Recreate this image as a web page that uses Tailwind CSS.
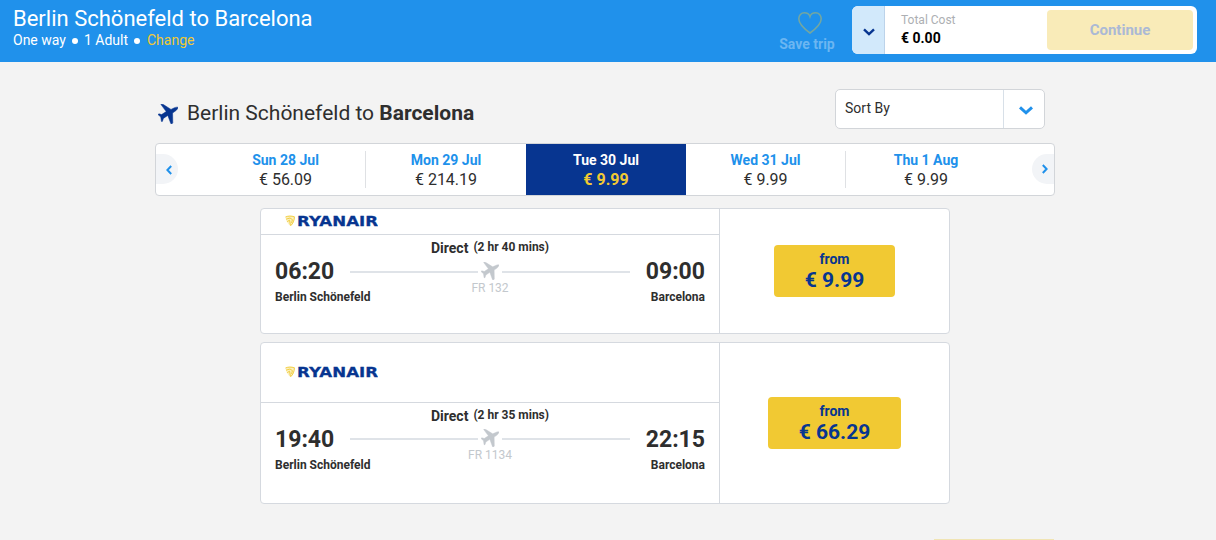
<!DOCTYPE html>
<html lang="en">
<head>
    <meta charset="UTF-8">
    <meta name="viewport" content="width=device-width, initial-scale=1.0">
    <title>Berlin Schönefeld to Barcelona</title>
    <script src="https://cdn.jsdelivr.net/npm/@tailwindcss/browser@4"></script>
    <style>
        body { font-family: 'Roboto', 'Liberation Sans', sans-serif; }
    </style>
</head>
<body class="bg-[#f3f3f3] text-[#2e2e2e]">
    <!-- Shared icons -->
    <svg class="hidden">
        <symbol id="plane" viewBox="0 0 20 20">
            <path d="M20 3.4C19.4 2.9 17.6 3.2 16.4 3.8L13 5.4 5.4.6 3.4 0 3 .6 8.2 7.6 3.6 10.6 1 9.8 0 10.6 2.8 13 3.4 17.4 4.4 17.4 5.4 14.4 9.8 11.4 12.8 19.6 13.8 20 14.8 18.8 14.6 9 17.8 6.7C19 5.8 20.2 4 20 3.4Z" fill="currentColor" stroke="currentColor" stroke-width=".5"/>
        </symbol>
        <symbol id="ryanair" viewBox="0 0 93 12">
            <path d="M.5 1.8C3 .6 7 .6 9.6 1.6 9.6 5.6 8 9 5.6 11 2.6 9 .6 5.6.5 1.8Z" fill="#fbf0c0"/>
            <path d="M.5 2C3 .8 6.5.8 9.4 1.8 9.4 5.4 8 8.6 5.6 10.8M1 4.2 5 3 7.4 4.6 6.6 8M2.2 6.6 4.6 5.2 5.4 10.4" fill="none" stroke="#f1c933" stroke-width=".9"/>
            <text x="12" y="11.1" textLength="81" lengthAdjust="spacingAndGlyphs" font-family="DejaVu Sans" font-weight="bold" font-size="14.5" fill="#073590" stroke="#073590" stroke-width=".3">RYANAIR</text>
        </symbol>
    </svg>

    <header class="bg-[#2091eb] h-[62px] flex justify-between text-white">
        <div class="pl-[13px] pt-[5px]">
            <h1 class="text-[22px] leading-[27px]">Berlin Schönefeld to Barcelona</h1>
            <div class="flex items-center text-sm leading-[17px]">
                <span>One way</span>
                <span class="size-1.5 rounded-full bg-white mx-1.5"></span>
                <span>1 Adult</span>
                <span class="size-1.5 rounded-full bg-white ml-1.5 mr-[7px]"></span>
                <a href="#" class="text-[#f1c933]">Change</a>
            </div>
        </div>
        <div class="flex pr-[19px]">
            <div class="w-[90px] pt-[11px] flex flex-col items-center">
                <svg class="w-[26px] h-6 ml-1.5" viewBox="0 0 26 24" fill="none" stroke="#f1c933" stroke-opacity=".4" stroke-width="1.6">
                    <path d="M13 22C8 18.4 1.8 13.8 1.8 7.8 1.8 4.4 4.2 1.8 7.4 1.8 10 1.8 12.2 3.2 13 5.6 13.8 3.2 16 1.8 18.6 1.8 21.8 1.8 24.2 4.4 24.2 7.8 24.2 13.8 18 18.4 13 22Z"/>
                </svg>
                <span class="text-sm leading-[18px] font-bold text-white/35">Save trip</span>
            </div>
            <div class="w-[345px] h-12 mt-1.5 bg-white rounded-md flex overflow-hidden">
                <div class="w-[33px] bg-[#d2e9fb] border-r border-[#bcd3ea] flex items-center justify-center">
                    <svg class="w-3 h-2 mt-1 ml-px" viewBox="0 0 12 8" fill="none" stroke="#073590" stroke-width="2.4"><path d="M1 1.3 6 6 11 1.3"/></svg>
                </div>
                <div class="flex-1 pl-4 pt-1.5">
                    <div class="text-xs leading-4 text-[#adafb3]">Total Cost</div>
                    <div class="text-sm leading-5 font-bold text-black">€ 0.00</div>
                </div>
                <button class="w-[146px] h-10 m-1 rounded bg-[#f9ebb8] text-[#abb9d5] text-[15px] font-bold">Continue</button>
            </div>
        </div>
    </header>

    <main class="w-[900px] ml-[155px]">
        <div class="flex justify-between pt-[27px] pr-[10px]">
            <div class="flex pt-[10px]">
                <svg class="size-5 mt-[5px] ml-[3px] mr-[9px] text-[#073590]"><use href="#plane"/></svg>
                <h2 class="text-[21px] leading-[28px]">Berlin Schönefeld to <b>Barcelona</b></h2>
            </div>
            <div class="w-[210px] h-10 bg-white border border-[#d2d5d9] rounded-[5px] flex text-sm">
                <span class="flex-1 pl-[9px] leading-[36px]">Sort By</span>
                <span class="w-[41px] border-l border-[#d8e0e8] flex items-center justify-center">
                    <svg class="w-3.5 h-[9px] mt-0.5 ml-1" viewBox="0 0 14 9" fill="none" stroke="#2091eb" stroke-width="3"><path d="M1 1.4 7 6.8 13 1.4"/></svg>
                </span>
            </div>
        </div>

        <!-- Date carousel -->
        <div class="mt-[14px] h-[53px] bg-white border border-[#d2d5d9] rounded flex items-center overflow-hidden">
            <button class="w-[22px] h-[30px] mb-0.5 bg-[#f2f4f7] rounded-r-full flex items-center justify-center">
                <svg class="w-1.5 h-2.5 ml-1 mt-0.5" viewBox="0 0 6 10" fill="none" stroke="#2091eb" stroke-width="2"><path d="M5.2 1 1.4 5 5.2 9"/></svg>
            </button>
            <div class="flex items-center text-center ml-[28px] mr-auto h-full">
                <div class="w-40 h-[37px] border-r border-[#dfe1e4]">
                    <div class="text-sm leading-[18px] font-bold text-[#2091eb]">Sun 28 Jul</div>
                    <div class="text-base leading-[21px]">€ 56.09</div>
                </div>
                <div class="w-40 h-[37px]">
                    <div class="text-sm leading-[18px] font-bold text-[#2091eb]">Mon 29 Jul</div>
                    <div class="text-base leading-[21px]">€ 214.19</div>
                </div>
                <div class="w-40 h-full pt-[7px] bg-[#073590]">
                    <div class="text-sm leading-[18px] font-bold text-white">Tue 30 Jul</div>
                    <div class="text-base leading-[21px] font-bold text-[#f1c933]">€ 9.99</div>
                </div>
                <div class="w-40 h-[37px] border-r border-[#dfe1e4]">
                    <div class="text-sm leading-[18px] font-bold text-[#2091eb]">Wed 31 Jul</div>
                    <div class="text-base leading-[21px]">€ 9.99</div>
                </div>
                <div class="w-40 h-[37px]">
                    <div class="text-sm leading-[18px] font-bold text-[#2091eb]">Thu 1 Aug</div>
                    <div class="text-base leading-[21px]">€ 9.99</div>
                </div>
            </div>
            <button class="w-[22px] h-[30px] mb-0.5 bg-[#f2f4f7] rounded-l-full flex items-center justify-center">
                <svg class="w-1.5 h-2.5 ml-1" viewBox="0 0 6 10" fill="none" stroke="#2091eb" stroke-width="2"><path d="M.8 1 4.6 5 .8 9"/></svg>
            </button>
        </div>

        <!-- Flights -->
        <div class="w-[690px] ml-[105px] mt-3 space-y-2">
            <div class="h-[126px] bg-white border border-[#d5d9df] rounded flex">
                <div class="w-[459px] border-r border-[#d5d9df]">
                    <div class="h-[26px] border-b border-[#d5d9df] flex items-center pl-6 pb-px">
                        <svg class="w-[93px] h-3"><use href="#ryanair"/></svg>
                    </div>
                    <div class="flex justify-between px-[14px] pt-[3px]">
                        <div class="w-[75px] pt-[21px] whitespace-nowrap">
                            <div class="text-[23px] leading-[26px] font-bold">06:20</div>
                            <div class="text-xs leading-[24px] font-bold">Berlin Schönefeld</div>
                        </div>
                        <div class="w-[280px] text-center">
                            <div class="flex justify-center gap-[5px] font-bold h-5">
                                <span class="text-sm leading-[20px]">Direct</span><span class="text-xs leading-[18px]">(2 hr 40 mins)</span>
                            </div>
                            <div class="flex items-center h-[18px] mt-1">
                                <span class="flex-1 h-0.5 mt-0.5 bg-[#dfe3e8]"></span>
                                <svg class="size-[18px] mx-[3px] text-[#c3c8cd]"><use href="#plane"/></svg>
                                <span class="flex-1 h-0.5 mt-0.5 bg-[#dfe3e8]"></span>
                            </div>
                            <div class="text-xs leading-[16px] text-[#c3c8cd]">FR 132</div>
                        </div>
                        <div class="w-[75px] pt-[21px] text-right">
                            <div class="text-[23px] leading-[26px] font-bold">09:00</div>
                            <div class="text-xs leading-[24px] font-bold">Barcelona</div>
                        </div>
                    </div>
                </div>
                <div class="flex-1 flex items-center justify-center">
                    <button class="w-[121px] h-[52px] bg-[#f1c933] text-[#073590] rounded font-bold">
                        <span class="block text-sm leading-[18px]">from</span>
                        <span class="block text-[21px] leading-[24px]">€ 9.99</span>
                    </button>
                </div>
            </div>

            <div class="h-[162px] bg-white border border-[#d5d9df] rounded flex">
                <div class="w-[459px] border-r border-[#d5d9df]">
                    <div class="h-[60px] border-b border-[#d5d9df] flex items-center pl-6 pb-0.5">
                        <svg class="w-[93px] h-3"><use href="#ryanair"/></svg>
                    </div>
                    <div class="flex justify-between px-[14px] pt-[3px]">
                        <div class="w-[75px] pt-[21px] whitespace-nowrap">
                            <div class="text-[23px] leading-[26px] font-bold">19:40</div>
                            <div class="text-xs leading-[24px] font-bold">Berlin Schönefeld</div>
                        </div>
                        <div class="w-[280px] text-center">
                            <div class="flex justify-center gap-[5px] font-bold h-5">
                                <span class="text-sm leading-[20px]">Direct</span><span class="text-xs leading-[18px]">(2 hr 35 mins)</span>
                            </div>
                            <div class="flex items-center h-[18px] mt-[3px]">
                                <span class="flex-1 h-0.5 mt-0.5 bg-[#dfe3e8]"></span>
                                <svg class="size-[18px] mx-[3px] text-[#c3c8cd]"><use href="#plane"/></svg>
                                <span class="flex-1 h-0.5 mt-0.5 bg-[#dfe3e8]"></span>
                            </div>
                            <div class="text-xs leading-[16px] text-[#c3c8cd]">FR 1134</div>
                        </div>
                        <div class="w-[75px] pt-[21px] text-right">
                            <div class="text-[23px] leading-[26px] font-bold">22:15</div>
                            <div class="text-xs leading-[24px] font-bold">Barcelona</div>
                        </div>
                    </div>
                </div>
                <div class="flex-1 flex items-center justify-center">
                    <button class="w-[133px] h-[52px] bg-[#f1c933] text-[#073590] rounded font-bold">
                        <span class="block text-sm leading-[18px]">from</span>
                        <span class="block text-[21px] leading-[24px]">€ 66.29</span>
                    </button>
                </div>
            </div>
        </div>

        <div class="flex justify-end mt-[35px] pr-px">
            <div class="w-[120px] h-px bg-[#f0e4b3]"></div>
        </div>
    </main>
</body>
</html>
